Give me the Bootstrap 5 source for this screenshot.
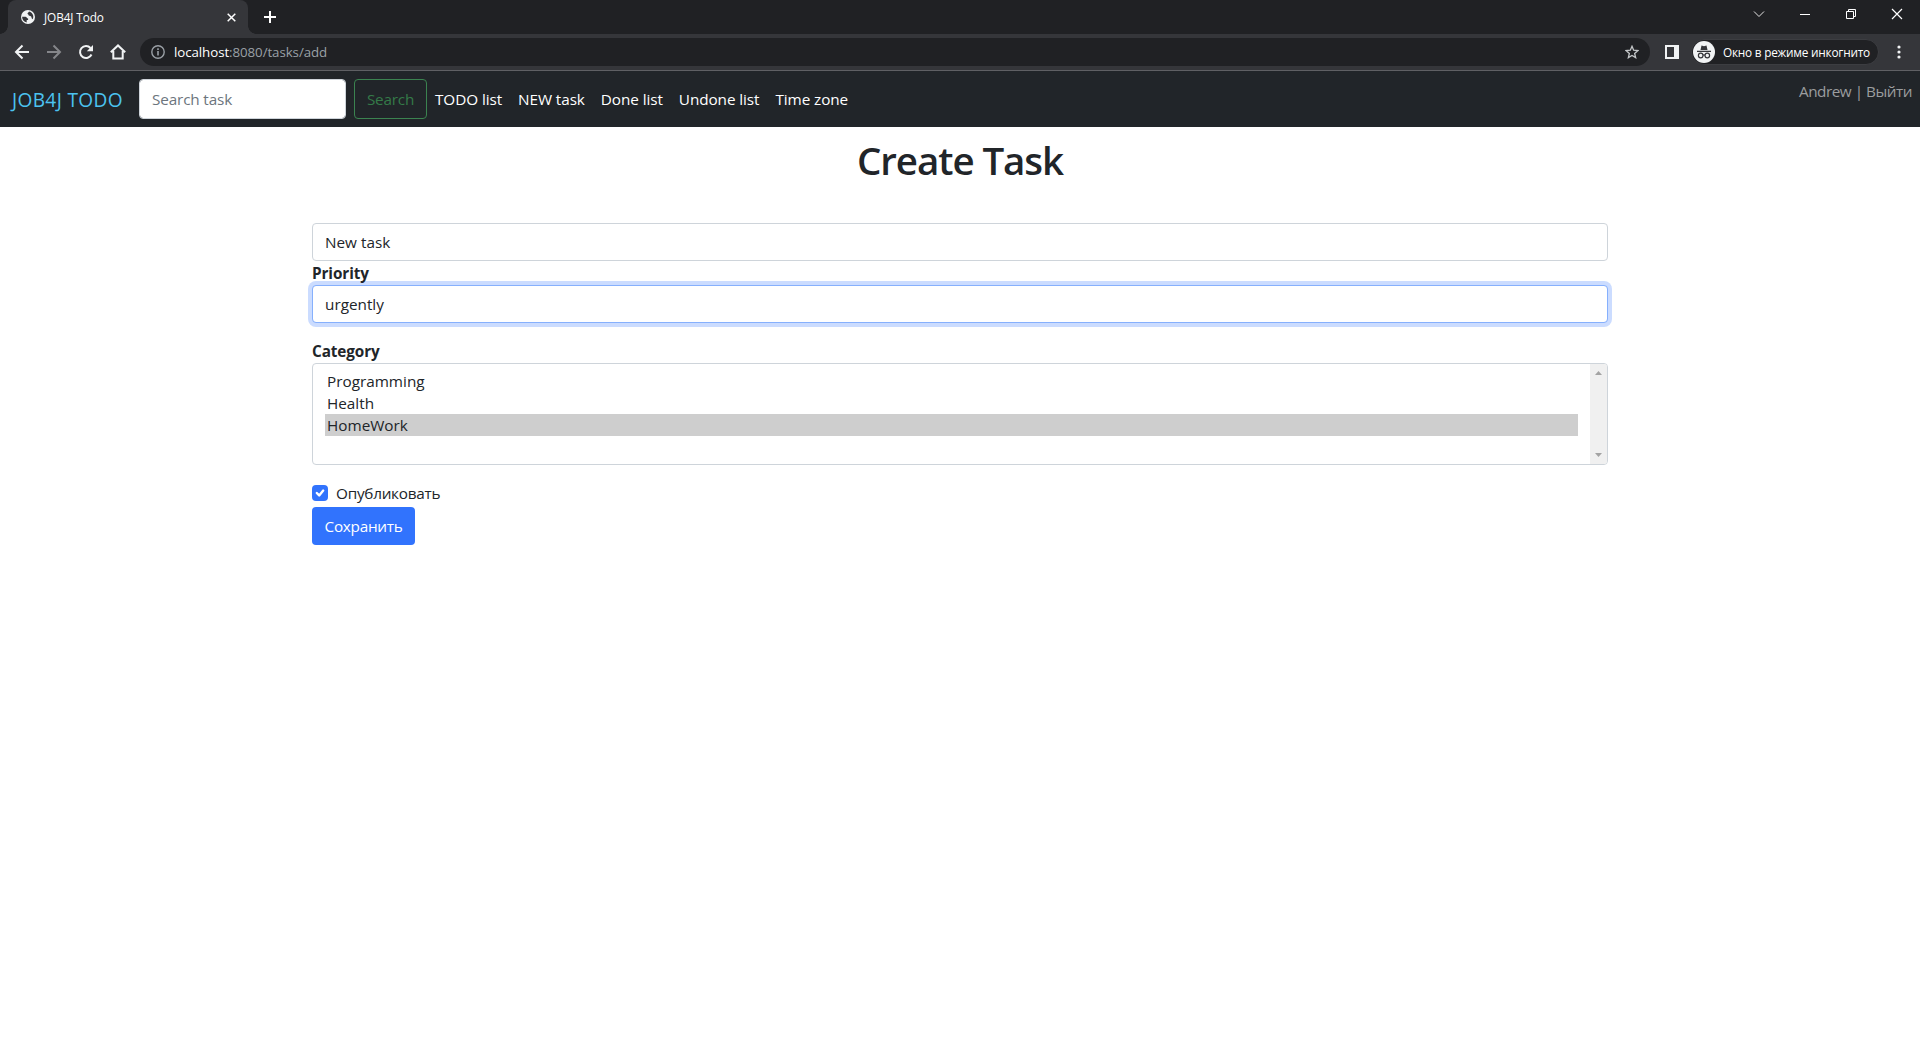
<!DOCTYPE html>
<html lang="ru">
<head>
<meta charset="utf-8">
<title>JOB4J Todo</title>
<link rel="stylesheet" href="https://cdn.jsdelivr.net/npm/bootstrap@5.3.0/dist/css/bootstrap.min.css">
<script src="https://cdn.jsdelivr.net/npm/bootstrap@5.3.0/dist/js/bootstrap.bundle.min.js"></script>
<style>
  body { font-family: "Open Sans", "Noto Sans", sans-serif; font-size: 15.3px; line-height: 24px; color: #212529; background: #fff; overflow: hidden; }
  svg { display: block; flex: none; }
  .tabstrip { height: 34px; background: #202124; }
  .browser-tab { width: 240px; height: 34px; margin-left: 8px; padding: 0 12px 0 13px; background: #35363a; border-radius: 8px 8px 0 0; position: relative; color: #fff; }
  .browser-tab::before, .browser-tab::after { content: ""; position: absolute; bottom: 0; width: 8px; height: 8px; }
  .browser-tab::before { left: -8px; background: radial-gradient(circle at 0 0, #202124 7.5px, #35363a 8px); }
  .browser-tab::after { right: -8px; background: radial-gradient(circle at 100% 0, #202124 7.5px, #35363a 8px); }
  .tab-title { font-size: 11.8px; letter-spacing: -.1px; margin-left: 9px; }
  .newtab { margin-left: 16px; }
  .wincontrols { gap: 34px; padding-right: 17px; height: 28px; }
  .toolbar { height: 37px; background: #35363a; border-bottom: 1px solid #5f6064; }
  .omnibox { height: 28px; border-radius: 14px; background: #202124; margin-left: 14px; color: #9aa0a6; font-size: 13.3px; letter-spacing: -.07px; padding: 0 11px; }
  .omnibox b { font-weight: 400; color: #fff; }
  .address { margin-left: 9px; }
  .sidepanel { margin-left: 15px; }
  .kebab { margin: 0 19px 0 18px; }
  .incog { height: 26px; width: 188px; border-radius: 13px; background: #202124; border: 1px solid #3c3d41; color: #fff; font-size: 11.8px; letter-spacing: -.22px; padding-left: 1px; margin-left: 12px; white-space: nowrap; }
  .incog span { margin-left: 8px; }
  .appbar { height: 56px; background: #212529; padding: 8px 8px 8px 12px; }
  .brand { color: #4cc3f0; font-size: 19.1px; letter-spacing: .35px; line-height: 30px; width: 127px; padding-top: 1px; }
  .form-control, .btn { font-size: 15.3px; line-height: 24px; border-radius: 4px; }
  .form-control { padding: 6px 12px; border-color: #ced4da; height: 38px; color: #212529; }
  .appbar .form-control { width: 207px; height: 40px; letter-spacing: -.15px; }
  .form-control::placeholder { color: #6c757d; opacity: 1; }
  .btn-find { width: 73px; height: 40px; margin-left: 8px; padding: 0; border: 1px solid #3b8350; color: #347a48; letter-spacing: -.2px; }
  .menu { margin-left: 8px; gap: 16px; }
  .menu a { color: #fff; text-decoration: none; white-space: nowrap; letter-spacing: -.08px; }
  .user { color: #9b9d9f; height: 24px; letter-spacing: -.48px; }
  h1 { font-size: 38.5px; font-weight: 600; letter-spacing: -1.08px; line-height: 48px; margin: 9px 0 39px; }
  .focused { border-color: #86b0fd; box-shadow: 0 0 0 4px #cbdcff; }
  .lbl { font-weight: 700; height: 24px; display: block; letter-spacing: -.1px; }
  .listbox { height: 102px; border: 1px solid #ced4da; border-radius: 4px; overflow: hidden; }
  .opts { padding: 6px 12px 0 12px; }
  .opts div { height: 22px; line-height: 22px; padding-left: 2px; }
  .opts .chosen { background: #cecece; }
  .scroller { width: 17px; background: #f0f0f0; padding: 7px 0; }
  .check { width: 16px; height: 16px; border-radius: 4px; background: #3173fd; }
  .publish { letter-spacing: -.25px; margin-bottom: 2px; }
  .btn-save { width: 103px; height: 38px; padding: 0; border: 0; background: #3173fd; color: #fff; letter-spacing: -.26px; }
</style>
</head>
<body>
<header>
  <div class="tabstrip d-flex justify-content-between">
    <div class="d-flex align-items-center">
      <div class="browser-tab d-flex align-items-center">
        <svg width="14" height="14" viewBox="0 0 14 14"><circle cx="7" cy="7" r="7" fill="#f1f3f4"/><path d="M1.2 6.8h3.200c1.600 0 1.200 1.800 2.700 1.800v1.500H5.700v2.300C3 12 1 9.500 1.200 6.800zM8 1.500c0 1-1.500 1-1.500 2s1 .6 1 1.600 1.700.5 2.600 1.500-.2 2 1.700 2.600c1.300-2.800.2-6.500-3.800-7.700z" fill="#35363a"/></svg>
        <span class="tab-title">JOB4J Todo</span>
        <svg class="ms-auto" width="9" height="9" viewBox="0 0 9 9"><path d="M.7.7l7.600 7.600M8.300.7L.7 8.300" stroke="#fff" stroke-width="1.500"/></svg>
      </div>
      <svg class="newtab" width="12" height="12" viewBox="0 0 12 12"><path d="M6 0v12M0 6h12" stroke="#fff" stroke-width="2"/></svg>
    </div>
    <div class="wincontrols d-flex align-items-center">
      <svg width="12" height="8" viewBox="0 0 12 8"><path d="M1 1.500l5 5 5-5" fill="none" stroke="#e4e4e4"/></svg>
      <svg width="12" height="12" viewBox="0 0 12 12"><path d="M1 6.500h10" stroke="#fff"/></svg>
      <svg width="12" height="12" viewBox="0 0 12 12"><path d="M1.500 3.500h7v7h-7zM3.500 3V1.500h7v7H9" fill="none" stroke="#fff"/></svg>
      <svg width="12" height="12" viewBox="0 0 12 12"><path d="M1 1l10 10M11 1L1 11" stroke="#fff" stroke-width="1.200"/></svg>
    </div>
  </div>
  <div class="toolbar d-flex align-items-center">
    <svg width="126" height="36" viewBox="0 0 126 36" fill="none" stroke="#f1f3f4" stroke-width="2"><path d="M29 18H16M22.500 11.500L16 18l6.500 6.500"/><path d="M47 18h13M53.500 11.500L60 18l-6.500 6.500" stroke="#85868a"/><path d="M91.500 20.500a6 6 0 1 1-1-6.500"/><path d="M93 11v6.200h-6.200z" fill="#f1f3f4" stroke="none"/><path d="M110.800 18.300l7.200-6.800 7.200 6.800M113.300 17v7.600h9.400V17"/></svg>
    <div class="omnibox flex-grow-1 d-flex align-items-center">
      <svg width="14" height="14" viewBox="0 0 14 14"><circle cx="7" cy="7" r="6.200" fill="none" stroke="#9aa0a6" stroke-width="1.400"/><path d="M7 6v4.500M7 3.300v1.600" stroke="#9aa0a6" stroke-width="1.600"/></svg>
      <span class="address"><b>localhost</b>:8080/tasks/add</span>
      <svg class="ms-auto" width="14" height="14" viewBox="0 0 14 14"><path d="M7 1.300l1.650 3.900 4.200.4-3.200 2.800 1 4.200L7 10.400l-3.650 2.200 1-4.200-3.200-2.800 4.200-.4z" fill="none" stroke="#c4c7c9" stroke-width="1.300"/></svg>
    </div>
    <svg class="sidepanel" width="14" height="14" viewBox="0 0 14 14"><path d="M0 0h14v14H0zM2 2v10h7V2z" fill="#f1f3f4" fill-rule="evenodd"/></svg>
    <div class="incog d-flex align-items-center">
      <svg width="22" height="22" viewBox="0 0 22 22"><circle cx="11" cy="11" r="11" fill="#f1f3f4"/><path d="M7.500 9l1-4.500 2.500.7 2.500-.7 1 4.500zM4 9.700h14v1.200H4z" fill="#35363a"/><g fill="none" stroke="#35363a" stroke-width="1.200"><circle cx="7.700" cy="14.500" r="2.300"/><circle cx="14.300" cy="14.500" r="2.300"/><path d="M10 14.200q1-.6 2 0"/></g></svg>
      <span>Окно в режиме инкогнито</span>
    </div>
    <svg class="kebab" width="4" height="14" viewBox="0 0 4 14"><g fill="#f1f3f4"><circle cx="2" cy="2" r="1.600"/><circle cx="2" cy="7" r="1.600"/><circle cx="2" cy="12" r="1.600"/></g></svg>
  </div>
</header>
<nav class="appbar d-flex">
  <div class="brand align-self-center">JOB4J TODO</div>
  <input class="form-control" type="text" placeholder="Search task">
  <button class="btn btn-find">Search</button>
  <div class="menu d-flex align-items-center">
    <a href="#">TODO list</a>
    <a href="#">NEW task</a>
    <a href="#">Done list</a>
    <a href="#">Undone list</a>
    <a href="#">Time zone</a>
  </div>
  <div class="user ms-auto">Andrew | Выйти</div>
</nav>
<main class="container">
  <h1 class="text-center">Create Task</h1>
  <input class="form-control" type="text" value="New task">
  <label class="lbl">Priority</label>
  <div class="form-control focused">urgently</div>
  <label class="lbl mt-3">Category</label>
  <div class="listbox d-flex">
    <div class="opts flex-grow-1">
      <div>Programming</div>
      <div>Health</div>
      <div class="chosen">HomeWork</div>
    </div>
    <div class="scroller d-flex flex-column align-items-center justify-content-between">
      <svg width="7" height="4" viewBox="0 0 7 4"><path d="M3.500 0L7 4H0z" fill="#a3a3a3"/></svg>
      <svg width="7" height="4" viewBox="0 0 7 4"><path d="M3.500 4L7 0H0z" fill="#a3a3a3"/></svg>
    </div>
  </div>
  <div class="publish d-flex align-items-center mt-3 gap-2">
    <span class="check"><svg width="16" height="16" viewBox="0 0 20 20"><path d="M6 10l3 3 5-6" fill="none" stroke="#fff" stroke-width="3" stroke-linecap="round" stroke-linejoin="round"/></svg></span>
    <span>Опубликовать</span>
  </div>
  <button class="btn btn-save">Сохранить</button>
</main>
</body>
</html>
